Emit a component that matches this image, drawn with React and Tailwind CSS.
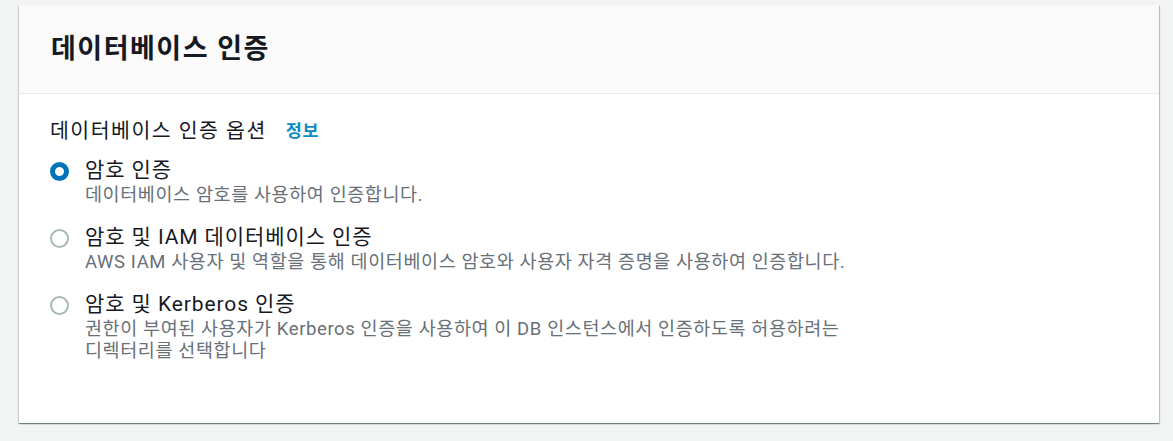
import React from "react";

const font = { fontFamily: 'Roboto, "Noto Sans CJK KR", sans-serif' };

function Radio({ checked }) {
  return checked ? (
    <span className="mt-[4px] box-border block h-[19px] w-[19px] shrink-0 rounded-full border-[5px] border-[#0073bb] bg-white" />
  ) : (
    <span className="mt-[4px] box-border block h-[19px] w-[19px] shrink-0 rounded-full border-2 border-[#aab7b8] bg-white" />
  );
}

function Option({ checked, title, children }) {
  return (
    <div className="flex items-start gap-[16px]">
      <Radio checked={checked} />
      <div className="flex flex-col">
        <div className="text-[21px] leading-[25px] tracking-[0.9px] text-[#16191f]">{title}</div>
        <div className="mt-[1px] text-[18.5px] leading-[22px] tracking-[0.6px] text-[#687078]">{children}</div>
      </div>
    </div>
  );
}

export default function App() {
  return (
    <div className="min-h-[441px] w-full bg-[#f2f3f3] pl-[19px] pr-[14px] pt-[5px]" style={font}>
      <div className="h-[418px] bg-white shadow-[0_1px_1px_0_rgba(0,28,36,0.35),1px_1px_1px_0_rgba(0,28,36,0.2),-1px_1px_1px_0_rgba(0,28,36,0.12)]">
        <div className="flex h-[89px] items-center border-b border-[#eaeded] bg-[#fafafa] pl-[32px]">
          <h2 className="text-[27px] font-bold leading-[32px] tracking-[1.5px] text-[#16191f]">데이터베이스 인증</h2>
        </div>
        <div className="px-[31px] pt-[25px]">
          <div className="flex items-center gap-[19px] text-[20.5px] leading-[24px] tracking-[1.5px] text-[#16191f]">
            <span>데이터베이스 인증 옵션</span>
            <span className="text-[17.5px] font-bold tracking-[0.5px] text-[#0d8ac4]">정보</span>
          </div>
          <div className="mt-[15px] flex flex-col gap-[19px]">
            <Option checked title="암호 인증">
              데이터베이스 암호를 사용하여 인증합니다.
            </Option>
            <Option title="암호 및 IAM 데이터베이스 인증">
              AWS IAM 사용자 및 역할을 통해 데이터베이스 암호와 사용자 자격 증명을 사용하여 인증합니다.
            </Option>
            <Option title="암호 및 Kerberos 인증">
              권한이 부여된 사용자가 Kerberos 인증을 사용하여 이 DB 인스턴스에서 인증하도록 허용하려는
              <br />
              디렉터리를 선택합니다
            </Option>
          </div>
        </div>
      </div>
    </div>
  );
}
